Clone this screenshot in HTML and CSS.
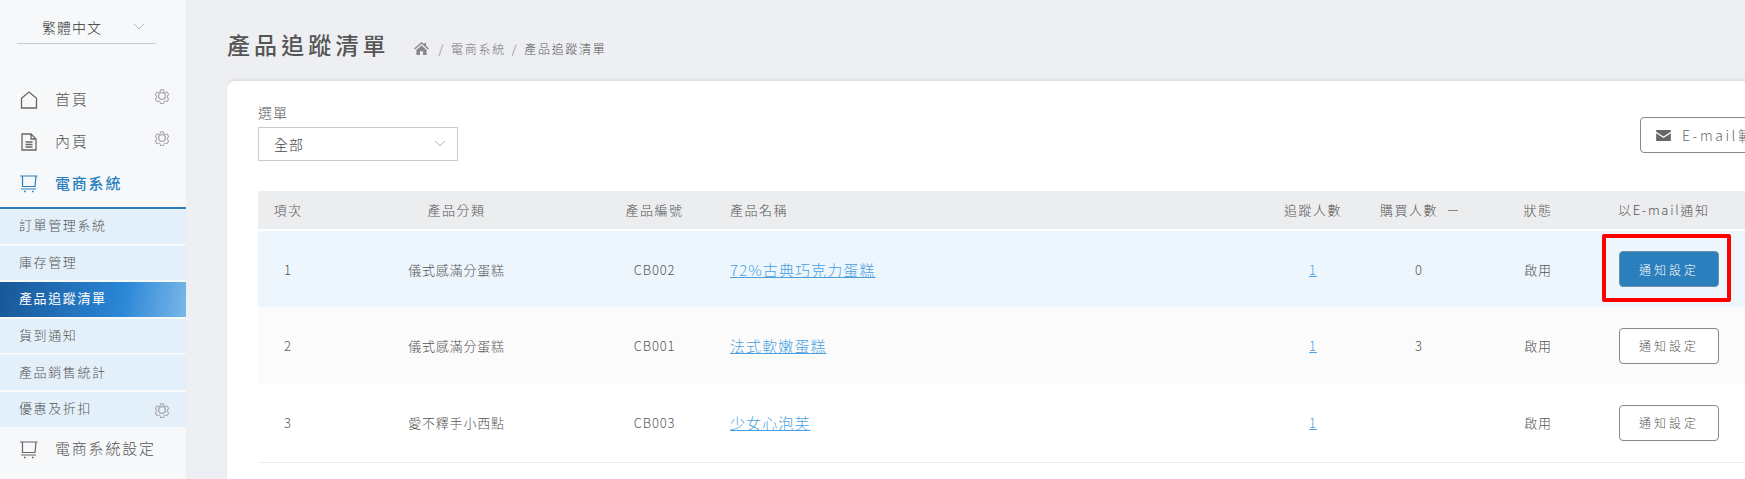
FILE: index.html
```html
<!DOCTYPE html>
<html lang="zh-Hant">
<head>
  <meta charset="UTF-8" />
  <title>產品追蹤清單</title>
  <link rel="stylesheet" href="styles.css">
</head>
<body>

  <svg class="defs" width="0" height="0">
    <symbol id="gear" viewBox="0 0 24 24">
      <circle cx="12" cy="12" r="5" fill="none" stroke="currentColor" stroke-width="2"/>
      <path d="M9.6 1.8h4.8l.8 3 2.6 1.5 3-.8 2.3 4.1-2.2 2.2v3l-.1-.2 2.3 2.3-2.3 4.1-3-.8-2.6 1.5-.8 3H9.6l-.8-3-2.6-1.5-3 .8L.9 16.9l2.2-2.3v-3L.9 9.6l2.3-4.1 3 .8 2.6-1.5z" transform="translate(1.2 1.2) scale(.9)" fill="none" stroke="currentColor" stroke-width="1.7" stroke-linejoin="round"/>
    </symbol>
    <symbol id="cart" viewBox="0 0 18 18">
      <path d="M0 1h17.5M2.5 1v10.5h12.5L16 1M1 14h15" fill="none" stroke="currentColor" stroke-width="1.2"/>
      <path d="M4 16.5h1.6M12 16.5h1.6" fill="none" stroke="currentColor" stroke-width="1.6"/>
    </symbol>
    <symbol id="chev" viewBox="0 0 12 8">
      <path d="M1 1l5 5 5-5" fill="none" stroke="currentColor" stroke-width="1"/>
    </symbol>
  </svg>

  <aside class="sidebar">
    <div class="lang">
      <span>繁體中文</span>
      <svg class="chev"><use href="#chev"/></svg>
    </div>

    <ul class="menu">
      <li class="menu-item">
        <svg class="menu-icon" viewBox="0 0 18 18"><path d="M1.5 17V7.2L9 1l7.5 6.2V17z" fill="none" stroke="currentColor" stroke-width="1.3"/></svg>
        <span>首頁</span>
        <svg class="gear"><use href="#gear"/></svg>
      </li>
      <li class="menu-item">
        <svg class="menu-icon" viewBox="0 0 18 18"><path d="M2 1h9l5 5v11H2zM11 1v5h5M5.5 9h7M5.5 11.5h7M5.5 14h7" fill="none" stroke="currentColor" stroke-width="1.3"/></svg>
        <span>內頁</span>
        <svg class="gear"><use href="#gear"/></svg>
      </li>
      <li class="menu-item menu-on">
        <svg class="menu-icon"><use href="#cart"/></svg>
        <span>電商系統</span>
      </li>
    </ul>

    <ul class="submenu">
      <li>訂單管理系統</li>
      <li>庫存管理</li>
      <li class="sub-on">產品追蹤清單</li>
      <li>貨到通知</li>
      <li>產品銷售統計</li>
      <li>優惠及折扣<svg class="gear"><use href="#gear"/></svg></li>
    </ul>

    <ul class="menu">
      <li class="menu-item">
        <svg class="menu-icon"><use href="#cart"/></svg>
        <span>電商系統設定</span>
      </li>
    </ul>
  </aside>

  <main class="main">
    <div class="page-head">
      <h1>產品追蹤清單</h1>
      <div class="crumbs">
        <svg class="crumb-home" viewBox="0 0 16 14"><path d="M8 0l3 2.5V1h2v3.2L16 7l-1 1-7-6-7 6-1-1zM2.5 8.5L8 3.8l5.5 4.7V14H9.7v-4H6.3v4H2.5z" fill="currentColor"/></svg>
        <span>/</span><span>電商系統</span><span>/</span><span class="crumb-now">產品追蹤清單</span>
      </div>
    </div>

    <section class="panel">
      <div class="filter-row">
        <div>
          <label class="filter-label">選單</label>
          <div class="select">全部<svg class="chev"><use href="#chev"/></svg></div>
        </div>
        <button class="btn-mail">
          <svg viewBox="0 0 16 12"><path d="M0 0h16v2L8 7 0 2zM0 3.6l8 5 8-5V12H0z" fill="currentColor"/></svg>
          E-mail範本
        </button>
      </div>

      <table class="lista">
        <colgroup>
          <col class="c1"><col class="c2"><col class="c3"><col class="c4"><col class="c5"><col class="c6"><col class="c7"><col class="c8">
        </colgroup>
        <thead>
          <tr>
            <th>項次</th>
            <th>產品分類</th>
            <th>產品編號</th>
            <th class="left">產品名稱</th>
            <th>追蹤人數</th>
            <th>購買人數<i class="dash"></i></th>
            <th>狀態</th>
            <th class="left">以E-mail通知</th>
          </tr>
        </thead>
        <tbody>
          <tr class="row-on">
            <td>1</td>
            <td>儀式感滿分蛋糕</td>
            <td>CB002</td>
            <td class="left"><a href="#" class="name">72%古典巧克力蛋糕</a></td>
            <td><a href="#">1</a></td>
            <td>0</td>
            <td>啟用</td>
            <td class="left">
              <span class="marked">
                <button class="btn btn-blue">通知設定</button>
                <span class="red-box"></span>
              </span>
            </td>
          </tr>
          <tr class="row-alt">
            <td>2</td>
            <td>儀式感滿分蛋糕</td>
            <td>CB001</td>
            <td class="left"><a href="#" class="name">法式軟嫩蛋糕</a></td>
            <td><a href="#">1</a></td>
            <td>3</td>
            <td>啟用</td>
            <td class="left"><button class="btn">通知設定</button></td>
          </tr>
          <tr class="row-last">
            <td>3</td>
            <td>愛不釋手小西點</td>
            <td>CB003</td>
            <td class="left"><a href="#" class="name">少女心泡芙</a></td>
            <td><a href="#">1</a></td>
            <td></td>
            <td>啟用</td>
            <td class="left"><button class="btn">通知設定</button></td>
          </tr>
        </tbody>
      </table>
    </section>
  </main>

</body>
</html>
```

FILE: styles.css
```css
* {
  box-sizing: border-box;
}

html, body {
  height: 479px;
  overflow: hidden;
}

body {
  margin: 0;
  display: flex;
  font-family: "Noto Sans CJK TC", "Noto Sans", sans-serif;
  font-weight: 300;
  color: #555;
  background-color: #eeeff3;
}

.defs {
  position: absolute;
}

ul {
  list-style: none;
  margin: 0;
  padding: 0;
}

/* Sidebar */
.sidebar {
  width: 186px;
  flex-shrink: 0;
  background-color: #f7f8fa;
  padding-top: 14px;
}

.lang {
  display: flex;
  align-items: center;
  justify-content: space-between;
  height: 30px;
  margin: 0 30px 35px 17px;
  padding: 0 11px 3px 25px;
  border-bottom: 1px solid #c9cad3;
  font-size: 14px;
  letter-spacing: 1px;
  color: #333;
}

.chev {
  width: 12px;
  height: 8px;
  color: #b5b6bd;
}

.menu-item {
  display: flex;
  align-items: center;
  height: 42px;
  padding-left: 20px;
  position: relative;
  font-size: 15px;
  letter-spacing: 1.8px;
  color: #555;
}

.menu-item span {
  padding-bottom: 4px;
}

.menu-icon {
  width: 18px;
  height: 18px;
  margin-right: 17px;
  color: #666;
  flex-shrink: 0;
}

.menu-on {
  color: #2a7fc0;
  font-weight: 500;
  margin-bottom: 2px;
}

.menu-on .menu-icon {
  color: #2a7fc0;
}

.gear {
  width: 16px;
  height: 16px;
  position: absolute;
  right: 16px;
  color: #a8a9ad;
}

.menu-item .gear {
  top: 9px;
}

.submenu {
  border-top: 2px solid #2a7fc0;
}

.submenu li {
  display: flex;
  align-items: center;
  position: relative;
  height: 34.6px;
  margin-bottom: 2px;
  padding: 0 0 3px 19px;
  background-color: #e3f0f9;
  font-size: 13px;
  letter-spacing: 1.6px;
  color: #555;
}

.submenu li .gear {
  top: 10px;
}

.submenu li.sub-on {
  color: #fff;
  font-weight: 400;
  background: linear-gradient(100deg, #185797 0%, #2a86d6 65%, #79b7e9 100%);
}

/* Main */
.main {
  flex: 1;
  min-width: 0;
  padding-left: 41px;
}

.page-head {
  display: flex;
  align-items: center;
  height: 81px;
  padding-top: 6px;
}

h1 {
  margin: 0;
  font-size: 23px;
  font-weight: 500;
  letter-spacing: 4.1px;
  color: #555;
}

.crumbs {
  display: flex;
  align-items: center;
  gap: 6px;
  margin-left: 24px;
  padding-top: 10px;
  font-size: 12px;
  letter-spacing: 1.7px;
  color: #777;
}

.crumb-now {
  color: #555;
}

.crumb-home {
  width: 15px;
  height: 13px;
  margin-right: 4px;
  color: #888;
}

.panel {
  width: 1600px;
  height: 398px;
  padding: 0 31px;
  background-color: #fff;
  border-radius: 8px 0 0 0;
  box-shadow: 0 -2px 2px #dcdde0;
}

.filter-row {
  display: flex;
  justify-content: space-between;
  align-items: flex-start;
  height: 110px;
  padding-top: 21px;
}

.filter-label {
  display: block;
  height: 25px;
  font-size: 14px;
  letter-spacing: 1px;
  line-height: 20px;
}

.select {
  display: flex;
  align-items: center;
  justify-content: space-between;
  width: 200px;
  height: 34px;
  padding: 0 11px 0 15px;
  border: 1px solid #c9cad3;
  font-size: 14px;
  letter-spacing: 1px;
  color: #444;
}

.btn-mail {
  display: flex;
  align-items: center;
  gap: 11px;
  width: 220px;
  height: 36px;
  margin: 15px 0 0 0;
  position: relative;
  left: 64px;
  padding: 0 0 0 15px;
  background: #fff;
  border: 1px solid #888;
  border-radius: 4px;
  font: inherit;
  font-size: 14px;
  letter-spacing: 2.6px;
  color: #666;
}

.btn-mail svg {
  width: 15px;
  height: 11px;
  color: #666;
}

/* Table */
.lista {
  width: 1516px;
  table-layout: fixed;
  border-collapse: collapse;
  font-size: 13px;
  letter-spacing: .8px;
}

.c1 { width: 60px; }
.c2 { width: 277px; }
.c3 { width: 119px; }
.c4 { width: 556px; }
.c5 { width: 86px; }
.c6 { width: 126px; }
.c7 { width: 112px; }
.c8 { width: 180px; }

th {
  height: 39px;
  padding: 0 0 2px;
  background-color: #ecedef;
  border-bottom: 2px solid #fff;
  font-size: 13px;
  font-weight: 300;
  letter-spacing: 1.5px;
  text-align: center;
}

td {
  padding: 0;
  text-align: center;
}

th.left, td.left {
  text-align: left;
  padding-left: 16px;
}

th:last-child {
  padding-left: 24px;
  letter-spacing: 1.7px;
}

td:last-child {
  padding-left: 25px;
}

.dash {
  display: inline-block;
  width: 10px;
  height: 1px;
  margin-left: 10px;
  vertical-align: middle;
  background-color: #888;
}

tbody tr {
  height: 77px;
}

.row-last {
  height: 78px;
  border-bottom: 1px solid #eceded;
}

.row-on {
  background-color: #eef6fd;
}

.row-alt {
  background-color: #fbfbfb;
}

a {
  color: #4a9fe0;
}

.name {
  font-size: 15px;
  letter-spacing: 1.1px;
}

.btn {
  display: block;
  width: 100px;
  height: 36px;
  background: #fff;
  border: 1px solid #888;
  border-radius: 4px;
  font: inherit;
  font-size: 12px;
  letter-spacing: 3px;
  color: #555;
}

.btn-blue {
  background-color: #2a7fbc;
  border-color: #6f8ea6;
  color: #fff;
}

.marked {
  display: block;
  position: relative;
  width: 100px;
}

.red-box {
  position: absolute;
  top: -17px;
  right: -12px;
  bottom: -15px;
  left: -17px;
  border: 4px solid #ff0000;
  border-radius: 2px;
}
```
